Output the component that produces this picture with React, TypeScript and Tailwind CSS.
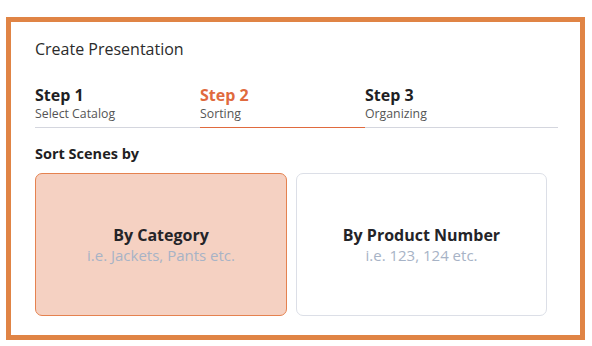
import React from "react"

const steps = [
  { label: "Step 1", sub: "Select Catalog", active: false },
  { label: "Step 2", sub: "Sorting", active: true },
  { label: "Step 3", sub: "Organizing", active: false },
]

export default function App() {
  return (
    <div className="w-[592px] h-[346px] bg-white pt-[17px] pl-[6px]" style={{ fontFamily: "'Open Sans', 'Noto Sans', sans-serif" }}>
      <div className="w-[579px] h-[323px] border-[5px] border-[#e08445] pl-[24px] pt-[17px]">
        <h1 className="text-[16px] leading-[20px] text-[#2b2b2b]">Create Presentation</h1>

        <div className="mt-[26px] w-[523px] flex border-b border-[#d4d6de]">
          {steps.map(s => (
            <div
              key={s.label}
              className={`w-[165px] pb-[5px] -mb-px ${s.active ? "border-b border-[#e06a3e]" : ""}`}
            >
              <div className={`text-[16px] leading-[21px] font-bold ${s.active ? "text-[#e06a3e]" : "text-[#1f1f24]"}`}>
                {s.label}
              </div>
              <div className="text-[12.3px] leading-[16px] text-[#555]">{s.sub}</div>
            </div>
          ))}
        </div>

        <div className="mt-[16px] text-[14.5px] leading-[19px] font-bold text-[#1f1f24]">
          Sort Scenes by
        </div>

        <div className="mt-[10px] flex gap-[9px]">
          <div className="w-[252px] h-[143px] rounded-[7px] border border-[#e5824f] bg-[#f5d1c2] flex flex-col items-center justify-center">
            <div className="text-[16px] leading-[20px] font-bold text-[#242428]">By Category</div>
            <div className="text-[15px] leading-[20px] text-[#a7b3c6]">i.e. Jackets, Pants etc.</div>
          </div>
          <div className="w-[251px] h-[143px] rounded-[7px] border border-[#dcdfe7] bg-white flex flex-col items-center justify-center">
            <div className="text-[16px] leading-[20px] font-bold text-[#242428]">By Product Number</div>
            <div className="text-[15px] leading-[20px] text-[#a7b3c6]">i.e. 123, 124 etc.</div>
          </div>
        </div>
      </div>
    </div>
  )
}
